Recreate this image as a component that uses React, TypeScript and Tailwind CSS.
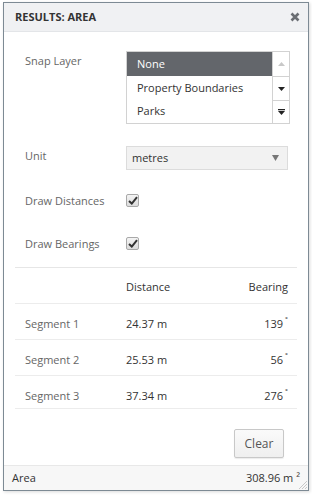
import React from "react";

const Check = () => (
  <span className="inline-flex h-[13px] w-[13px] items-center justify-center rounded-[2px] border border-[#a9a9a9] bg-[linear-gradient(#f4f4f4,#dcdcdc)]">
    <svg width="10" height="9" viewBox="0 0 10 9">
      <path d="M1 5 L3.8 7.6 L9 1.2" fill="none" stroke="#333" strokeWidth="2" />
    </svg>
  </span>
);

const rows: [string, string, string, string][] = [
  ["Segment 1", "24.37 m", "139", "h-[36px]"],
  ["Segment 2", "25.53 m", "56", "h-[36px]"],
  ["Segment 3", "37.34 m", "276", "h-[33px]"],
];

export default function App() {
  return (
    <div className="h-[495px] w-[312px] bg-white pl-[3px] pt-[2px] font-['Open_Sans',sans-serif] text-[11px] leading-[18px]">
      <div className="flex h-[489px] w-[306px] flex-col border border-[#7d8a94] bg-white shadow-[1px_1px_3px_rgba(0,0,0,0.15)]">
        <div className="flex h-[29px] shrink-0 items-center justify-between border-b border-[#e3e5e8] bg-[#f0f1f3] pl-[11px] pr-[8px]">
          <span className="text-[11px] font-bold text-[#333]">RESULTS: AREA</span>
          <svg width="10" height="10" viewBox="0 0 10 10">
            <path d="M1.5 1.5 L8.5 8.5 M8.5 1.5 L1.5 8.5" stroke="#6a6e73" strokeWidth="2.6" />
          </svg>
        </div>
        <div className="flex flex-1 flex-col px-[11px]">
          <div className="flex pt-[19px]">
            <div className="w-[111px] pl-[10px] pt-[1px] text-[#666]">Snap Layer</div>
            <div className="flex h-[73px] w-[164px] border border-[#d2d2d2]">
              <div className="flex flex-1 flex-col">
                <div className="flex h-[24px] items-center bg-[#63666b] pl-[10px] text-white">None</div>
                <div className="flex h-[24px] items-center pl-[10px] text-[#333]">Property Boundaries</div>
                <div className="flex h-[24px] items-center pl-[10px] text-[#333]">Parks</div>
              </div>
              <div className="flex w-[17px] flex-col border-l border-[#d2d2d2]">
                <div className="flex h-[24px] items-center justify-center">
                  <svg width="7" height="4" viewBox="0 0 7 4"><path d="M0 4 L3.5 0 L7 4Z" fill="#c8c8c8" /></svg>
                </div>
                <div className="flex h-[24px] items-center justify-center border-t border-[#d2d2d2]">
                  <svg width="7" height="4" viewBox="0 0 7 4"><path d="M0 0 L3.5 4 L7 0Z" fill="#222" /></svg>
                </div>
                <div className="flex flex-1 items-center justify-center border-t border-[#d2d2d2]">
                  <svg width="7" height="6" viewBox="0 0 7 6"><path d="M0 0 H7 V1.3 H0Z M0 2 L3.5 6 L7 2Z" fill="#222" /></svg>
                </div>
              </div>
            </div>
          </div>
          <div className="flex items-start pt-[22px]">
            <div className="w-[111px] pl-[10px] pt-[1px] text-[#666]">Unit</div>
            <div className="flex h-[24px] w-[162px] items-center justify-between border border-[#dcdcdc] bg-[#f2f2f2] pl-[5px] pr-[8px] text-[#333]">
              <span>metres</span>
              <svg width="7" height="6" viewBox="0 0 7 6"><path d="M0 0 L3.5 6 L7 0Z" fill="#777" /></svg>
            </div>
          </div>
          <div className="mt-[9px] flex h-[43px] items-center">
            <div className="w-[111px] pl-[10px] text-[#666]">Draw Distances</div>
            <Check />
          </div>
          <div className="flex h-[43px] items-center">
            <div className="w-[111px] pl-[10px] text-[#666]">Draw Bearings</div>
            <Check />
          </div>
          <div className="mt-[2px] border-t border-[#e6e6e6]">
            <div className="flex h-[36px] items-start border-b border-[#ececec] pr-[9px] pt-[10px] text-[#333]">
              <div className="w-[111px]"></div>
              <div className="flex-1">Distance</div>
              <div>Bearing</div>
            </div>
            {rows.map(([a, b, c, h]) => (
              <div key={a} className={`flex items-start border-b border-[#ececec] pr-[9px] pt-[11px] ${h}`}>
                <div className="w-[111px] pl-[10px] text-[#666]">{a}</div>
                <div className="flex-1 text-[#333]">{b}</div>
                <div className="text-[#333]">
                  {c}
                  <span className="relative -top-[4px] ml-[2px] text-[9px] font-bold">˚</span>
                </div>
              </div>
            ))}
          </div>
          <div className="flex justify-end pr-[13px] pt-[20px]">
            <button className="h-[29px] w-[50px] rounded-[2px] border border-[#c8c8c8] bg-[linear-gradient(#fafafa,#efefef)] text-[12px] text-[#555] shadow-[0_1px_1px_rgba(0,0,0,0.08)]">
              Clear
            </button>
          </div>
        </div>
        <div className="relative flex h-[25px] shrink-0 items-center justify-between border-t border-[#e8e8e8] bg-[#f7f7f7] pl-[8px] pr-[8px] text-[#333]">
          <span>Area</span>
          <span>
            308.96 m <span className="relative -top-[1px] text-[11px]">²</span>
          </span>
          <svg className="absolute bottom-[1px] right-[1px]" width="9" height="9" viewBox="0 0 9 9">
            <path d="M9 1 L1 9 M9 4 L4 9 M9 7 L7 9" stroke="#c8c8c8" strokeWidth="1" />
          </svg>
        </div>
      </div>
    </div>
  );
}
